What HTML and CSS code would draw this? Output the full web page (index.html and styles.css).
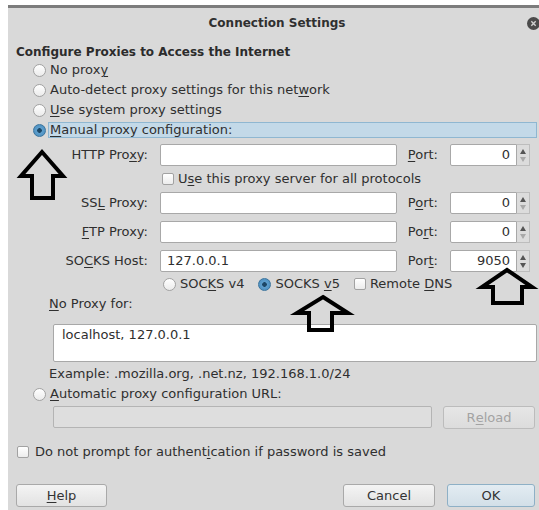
FILE: index.html
```html
<!DOCTYPE html>
<html lang="en">
<head>
<meta charset="utf-8">
<title>Connection Settings</title>
<link rel="stylesheet" href="styles.css">
</head>
<body>
<div class="dialog">
  <header class="titlebar">
    <span class="title">Connection Settings</span>
    <span class="close">
      <svg width="13" height="13" viewBox="0 0 13 13"><circle cx="6.5" cy="6.5" r="6.5" fill="#4b4b4b"/><path d="M4.3 4.3l4.4 4.4M8.7 4.3l-4.4 4.4" stroke="#d0d0d0" stroke-width="1.4"/></svg>
    </span>
  </header>

  <main class="content">
    <h1 class="heading">Configure Proxies to Access the Internet</h1>

    <div class="opt"><span class="radio"></span><span class="lbl">No prox<u>y</u></span></div>
    <div class="opt"><span class="radio"></span><span class="lbl">Auto-detect proxy settings for this net<u>w</u>ork</span></div>
    <div class="opt"><span class="radio"></span><span class="lbl"><u>U</u>se system proxy settings</span></div>
    <div class="opt"><span class="radio on"></span><span class="lbl focus"><u>M</u>anual proxy configuration:</span></div>

    <section class="manual">
      <div class="proxies">
        <span class="key">HTTP Pro<u>x</u>y:</span>
        <span class="field"></span>
        <span class="key"><u>P</u>ort:</span>
        <span class="spin"><span class="num">0</span><span class="steps"><i class="up"></i><i class="down off"></i></span></span>

        <span class="wide"><span class="check"></span><span>U<u>s</u>e this proxy server for all protocols</span></span>

        <span class="key">SS<u>L</u> Proxy:</span>
        <span class="field"></span>
        <span class="key">P<u>o</u>rt:</span>
        <span class="spin"><span class="num">0</span><span class="steps"><i class="up"></i><i class="down off"></i></span></span>

        <span class="key"><u>F</u>TP Proxy:</span>
        <span class="field"></span>
        <span class="key">Po<u>r</u>t:</span>
        <span class="spin"><span class="num">0</span><span class="steps"><i class="up"></i><i class="down off"></i></span></span>

        <span class="key">SO<u>C</u>KS Host:</span>
        <span class="field">127.0.0.1</span>
        <span class="key">Por<u>t</u>:</span>
        <span class="spin"><span class="num">9050</span><span class="steps"><i class="up"></i><i class="down"></i></span></span>

        <span class="wide socks">
          <span class="item"><span class="radio"></span><span>SOC<u>K</u>S v4</span></span>
          <span class="item"><span class="radio on"></span><span>SOCKS <u>v</u>5</span></span>
          <span class="item"><span class="check"></span><span>Remote <u>D</u>NS</span></span>
        </span>
      </div>

      <p class="caption"><u>N</u>o Proxy for:</p>
      <div class="area">localhost, 127.0.0.1</div>
      <p class="hint">Example: .mozilla.org, .net.nz, 192.168.1.0/24</p>
    </section>

    <div class="opt auto"><span class="radio"></span><span class="lbl"><u>A</u>utomatic proxy configuration URL:</span></div>
    <div class="url-row">
      <span class="field disabled"></span>
      <span class="btn disabled">R<u>e</u>load</span>
    </div>

    <div class="prompt"><span class="check"></span><span>Do not prompt for authent<u>i</u>cation if password is saved</span></div>

    <footer class="buttons">
      <span class="btn"><u>H</u>elp</span>
      <span class="spacer"></span>
      <span class="btn">Cancel</span>
      <span class="btn default">OK</span>
    </footer>
  </main>
</div>

<svg class="marks" width="539" height="510" viewBox="0 0 539 510">
  <g fill="none" stroke="#000" stroke-width="4" stroke-linejoin="miter">
    <path d="M42 152 L63 176 L53 176 L53 198 L32 198 L32 176 L21 176 Z"/>
    <path d="M323 297 L348 313 L332 313 L332 330 L309 330 L309 313 L297 313 Z"/>
    <path d="M507 270 L532 287 L522 287 L522 303 L493 303 L493 287 L482 287 Z"/>
  </g>
</svg>
</body>
</html>
```
FILE: styles.css
```css
html, body {
  margin: 0;
  height: 100%;
  overflow: hidden;
  background: #fff;
}

body {
  position: relative;
  font-family: "DejaVu Sans", sans-serif;
  font-size: 13px;
  line-height: 16px;
  color: #2f2f2f;
}

u {
  text-decoration-thickness: 1px;
  text-underline-offset: 2px;
}

/* window frame */
.dialog {
  margin: 5px 0 0 8px;
  width: 538px;
  height: 505px;
  overflow: hidden;
  box-sizing: border-box;
  border-top: 3px solid #7c7c7c;
  background: #d9d9d9;
}

.titlebar {
  height: 30px;
  padding: 0 6px;
  display: grid;
  grid-template-columns: 1fr auto 1fr;
  align-items: center;
}

.title {
  grid-column: 2;
  font-size: 12px;
  font-weight: bold;
  color: #303030;
}

.close {
  grid-column: 3;
  justify-self: end;
  display: flex;
}

.content {
  padding: 6px 9px 0 8px;
}

.heading {
  margin: 0;
  font-size: 12px;
  font-weight: bold;
  line-height: 16px;
  color: #2c2c2c;
}

/* radio options */
.opt {
  height: 20px;
  display: flex;
  align-items: center;
  padding-left: 17px;
}

.lbl {
  margin-left: 2px;
  padding: 0 1px;
  border: 1px solid transparent;
  line-height: 14px;
}

.lbl.focus {
  flex: 1;
  background: #c3d9e8;
  border-color: #8fb7d1;
}

.radio {
  flex: none;
  width: 13px;
  height: 13px;
  box-sizing: border-box;
  border-radius: 50%;
  border: 1px solid #a2a2a2;
  background: linear-gradient(#ffffff, #ebebeb);
}

.radio.on {
  border-color: #3a749d;
  background: radial-gradient(circle, #1c4766 0 2px, #5e9fcd 2.6px, #478abb 100%);
}

.check {
  flex: none;
  width: 12px;
  height: 12px;
  box-sizing: border-box;
  border: 1px solid #a2a2a2;
  border-radius: 2px;
  background: linear-gradient(#ffffff, #ececec);
}

/* manual proxy block */
.manual {
  margin-left: 33px;
}

.proxies {
  margin-top: 4px;
  display: grid;
  grid-template-columns: 99px 237px 29px 80px;
  grid-template-rows: 22px 12px 22px 22px 22px 10px;
  column-gap: 12px;
  row-gap: 7px;
  align-items: center;
}

.key {
  justify-self: end;
  white-space: nowrap;
}

.field {
  height: 22px;
  box-sizing: border-box;
  display: flex;
  align-items: center;
  padding: 0 6px;
  background: #fff;
  border: 1px solid #a8a8a8;
  border-radius: 2px;
}

.field.disabled {
  background: #dedede;
  border-color: #b4b4b4;
}

.spin {
  height: 22px;
  display: flex;
}

.num {
  flex: 1;
  box-sizing: border-box;
  border: 1px solid #a8a8a8;
  border-radius: 2px 0 0 2px;
  background: #fff;
  text-align: right;
  padding-right: 6px;
  line-height: 20px;
}

.steps {
  width: 13px;
  box-sizing: border-box;
  border: 1px solid #bdbdbd;
  border-left: none;
  background: #dcdcdc;
  display: flex;
  flex-direction: column;
  align-items: center;
  justify-content: space-around;
  padding: 2px 0;
}

.steps i {
  width: 0;
  height: 0;
  border-left: 3px solid transparent;
  border-right: 3px solid transparent;
}

.steps .up {
  border-bottom: 5px solid #555;
}

.steps .down {
  border-top: 5px solid #555;
}

.steps .down.off {
  border-top-color: #a9a9a9;
}

.wide {
  grid-column: 2 / -1;
  display: flex;
  align-items: center;
  gap: 4px;
  padding-left: 2px;
  white-space: nowrap;
}

.socks {
  padding-left: 3px;
  gap: 14px;
}

.socks .item {
  display: flex;
  align-items: center;
  gap: 4px;
}

.caption {
  margin: 7px 0 0;
}

.area {
  margin: 12px 0 0 4px;
  height: 38px;
  box-sizing: border-box;
  padding: 2px 8px;
  background: #fff;
  border: 1px solid #a8a8a8;
  border-radius: 2px;
}

.hint {
  margin: 4px 0 0;
}

.auto {
  margin-top: 2px;
}

.url-row {
  margin: 2px 2px 0 37px;
  display: flex;
  gap: 11px;
}

.url-row .field {
  flex: 1;
}

/* buttons */
.btn {
  width: 92px;
  height: 23px;
  box-sizing: border-box;
  display: flex;
  align-items: center;
  justify-content: center;
  border: 1px solid #a9a9a9;
  border-radius: 3px;
  background: linear-gradient(#f4f4f4, #e2e2e2);
  color: #333;
}

.btn.disabled {
  color: #a3a3a3;
  background: linear-gradient(#e6e6e6, #dcdcdc);
  border-color: #bcbcbc;
}

.btn.default {
  width: 88px;
  margin-right: 2px;
  border-color: #8eb0c6;
  background: linear-gradient(#e3ecf2, #d2dfe8);
}

.prompt {
  margin-top: 15px;
  height: 16px;
  display: flex;
  align-items: center;
  gap: 6px;
  padding-left: 1px;
}

.buttons {
  margin-top: 24px;
  display: flex;
  gap: 12px;
}

.buttons .btn:first-child {
  width: 91px;
}

.spacer {
  flex: 1;
}

/* arrows drawn on top of the window */
.marks {
  position: absolute;
  left: 0;
  top: 0;
  pointer-events: none;
}
```
